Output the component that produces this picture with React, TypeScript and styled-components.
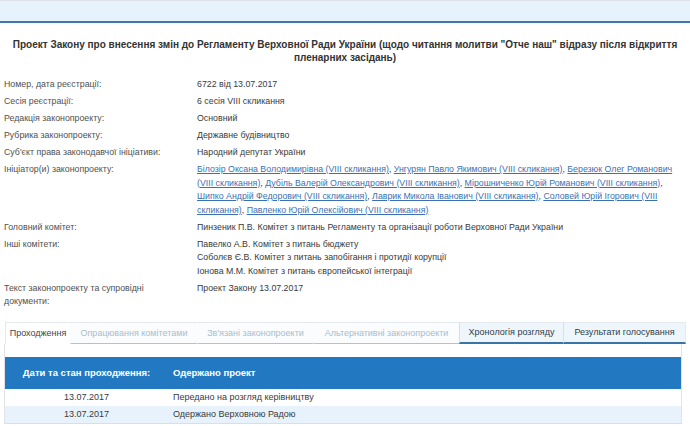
import React from "react";
import styled, { createGlobalStyle } from "styled-components";

const GlobalStyle = createGlobalStyle`
  html, body {
    margin: 0;
    padding: 0;
    background: #ffffff;
  }
  body {
    font-family: "Liberation Sans", Arial, sans-serif;
    color: #333333;
    width: 690px;
    height: 426px;
    overflow: hidden;
  }
`;

type Link = { name: string };

const initiators: Link[] = [
  { name: "Білозір Оксана Володимирівна (VIII скликання)" },
  { name: "Унгурян Павло Якимович (VIII скликання)" },
  { name: "Березюк Олег Романович (VIII скликання)" },
  { name: "Дубіль Валерій Олександрович (VIII скликання)" },
  { name: "Мірошниченко Юрій Романович (VIII скликання)" },
  { name: "Шипко Андрій Федорович (VIII скликання)" },
  { name: "Лаврик Микола Іванович (VIII скликання)" },
  { name: "Соловей Юрій Ігорович (VIII скликання)" },
  { name: "Павленко Юрій Олексійович (VIII скликання)" },
];

type TabState = "active" | "disabled" | "enabled";

const tabs: { label: string; state: TabState; w: number }[] = [
  { label: "Проходження", state: "active", w: 65 },
  { label: "Опрацювання комітетами", state: "disabled", w: 127 },
  { label: "Зв'язані законопроекти", state: "disabled", w: 116 },
  { label: "Альтернативні законопроекти", state: "disabled", w: 146 },
  { label: "Хронологія розгляду", state: "enabled", w: 104 },
  { label: "Результати голосування", state: "enabled", w: 123 },
];

const stages = [
  { date: "13.07.2017", text: "Передано на розгляд керівництву" },
  { date: "13.07.2017", text: "Одержано Верховною Радою" },
];

export default function App() {
  return (
    <>
      <GlobalStyle />
      <Page>
        <TopBand />
        <Title>
          Проект Закону про внесення змін до Регламенту Верховної Ради України
          (щодо читання молитви "Отче наш" відразу після відкриття пленарних
          засідань)
        </Title>

        <InfoGrid>
          <Label>Номер, дата реєстрації:</Label>
          <Value>6722 від 13.07.2017</Value>

          <Label>Сесія реєстрації:</Label>
          <Value>6 сесія VIII скликання</Value>

          <Label>Редакція законопроекту:</Label>
          <Value>Основний</Value>

          <Label>Рубрика законопроекту:</Label>
          <Value>Державне будівництво</Value>

          <Label>Суб'єкт права законодавчої ініціативи:</Label>
          <Value>Народний депутат України</Value>

          <Label>Ініціатор(и) законопроекту:</Label>
          <Value>
            {initiators.map((p, i) => (
              <React.Fragment key={p.name}>
                <PersonLink href="#">{p.name}</PersonLink>
                {i < initiators.length - 1 ? ", " : ""}
              </React.Fragment>
            ))}
          </Value>

          <Label>Головний комітет:</Label>
          <Value>
            Пинзеник П.В. Комітет з питань Регламенту та організації роботи
            Верховної Ради України
          </Value>

          <Label>Інші комітети:</Label>
          <Value>
            <div>Павелко А.В. Комітет з питань бюджету</div>
            <div>Соболєв Є.В. Комітет з питань запобігання і протидії корупції</div>
            <div>Іонова М.М. Комітет з питань європейської інтеграції</div>
          </Value>

          <Label>Текст законопроекту та супровідні документи:</Label>
          <Value>Проект Закону 13.07.2017</Value>
        </InfoGrid>

        <TabBar>
          {tabs.map((t) => (
            <Tab key={t.label} $state={t.state} $w={t.w}>
              {t.label}
            </Tab>
          ))}
        </TabBar>

        <Panel>
          <StageHead>
            <HeadCell $center>Дати та стан проходження:</HeadCell>
            <HeadCell>Одержано проект</HeadCell>
          </StageHead>
          {stages.map((s, i) => (
            <StageRow key={i} $alt={i % 2 === 1}>
              <DateCell>{s.date}</DateCell>
              <TextCell>{s.text}</TextCell>
            </StageRow>
          ))}
        </Panel>
      </Page>
    </>
  );
}

const Page = styled.div`
  width: 690px;
  height: 426px;
  overflow: hidden;
`;

const TopBand = styled.div`
  height: 20px;
  background: #e6f2fc;
  border-top: 1px solid #dde2e6;
  border-bottom: 2px solid #3d7aa6;
`;

const Title = styled.h1`
  margin: 15px 0 0;
  padding: 0 4px;
  font-size: 10px;
  line-height: 13px;
  font-weight: bold;
  text-align: center;
  color: #333333;
`;

const InfoGrid = styled.div`
  display: grid;
  grid-template-columns: 193px 1fr;
  row-gap: 3.5px;
  margin-top: 14px;
  padding: 0 8px 0 4px;
  font-size: 8.8px;
  line-height: 13.5px;
`;

const Label = styled.div`
  color: #505050;
  padding-right: 30px;
`;

const Value = styled.div`
  color: #3a3a3a;
`;

const PersonLink = styled.a`
  color: #3b70b3;
  text-decoration: underline;
`;

const TabBar = styled.div`
  display: flex;
  margin: 13px 0 0 5px;
  height: 22px;
`;

const Tab = styled.div<{ $state: TabState; $w: number }>`
  box-sizing: border-box;
  width: ${(p) => p.$w}px;
  display: flex;
  align-items: center;
  justify-content: center;
  font-size: 9px;
  white-space: nowrap;
  border-top: 1px solid #e3e9ee;
  border-left: 1px solid
    ${(p) => (p.$state === "active" ? "#e3e9ee" : p.$state === "enabled" ? "#d5e0ea" : "transparent")};
  color: ${(p) =>
    p.$state === "disabled" ? "#a9bccd" : p.$state === "enabled" ? "#2f3d4a" : "#3d4650"};
  background: ${(p) =>
    p.$state === "active" ? "#ffffff" : p.$state === "enabled" ? "#eef5fb" : "#fafcfe"};
  border-bottom: ${(p) =>
    p.$state === "active"
      ? "1px solid transparent"
      : p.$state === "enabled"
      ? "2px solid #3a74a6"
      : "1px solid #a6c5df"};

  &:last-child {
    border-right: 1px solid #e3e9ee;
  }
`;

const Panel = styled.div`
  margin: 0 8px 0 4px;
  padding-top: 13px;
  border-left: 1px solid #e0e4e8;
  border-right: 1px solid #e0e4e8;
  border-bottom: 1px solid #dcdfe2;
`;

const StageHead = styled.div`
  display: grid;
  grid-template-columns: 163px 1fr;
  align-items: center;
  height: 32px;
  background: #2279c1;
  color: #ffffff;
  font-size: 9.5px;
  font-weight: bold;
`;

const HeadCell = styled.div<{ $center?: boolean }>`
  text-align: ${(p) => (p.$center ? "center" : "left")};
  padding-left: ${(p) => (p.$center ? "0" : "5px")};
`;

const StageRow = styled.div<{ $alt: boolean }>`
  display: grid;
  grid-template-columns: 163px 1fr;
  align-items: center;
  height: 17px;
  font-size: 9px;
  color: #3a3a3a;
  background: ${(p) => (p.$alt ? "#e7f2fc" : "#ffffff")};
`;

const DateCell = styled.div`
  text-align: center;
`;

const TextCell = styled.div`
  padding-left: 5px;
`;
